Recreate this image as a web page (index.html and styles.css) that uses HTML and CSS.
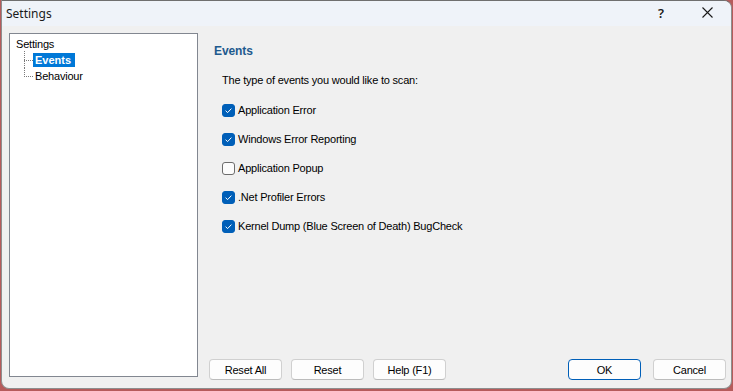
FILE: index.html
```html
<!DOCTYPE html>
<html>
<head>
  <meta charset="UTF-8">
  <title>Settings</title>
  <link rel="stylesheet" href="styles.css">
</head>
<body>
  <div class="window">
    <div class="titlebar">
      <span class="title">Settings</span>
      <span class="caption-btn help">?</span>
      <span class="caption-btn close">
        <svg width="11" height="11" viewBox="0 0 11 11"><path d="M0.5 0.5 L10.5 10.5 M10.5 0.5 L0.5 10.5" stroke="#1a1a1a" stroke-width="1.1" fill="none"/></svg>
      </span>
    </div>

    <div class="main">
      <!-- Tree -->
      <div class="tree">
        <div class="tree-root">Settings</div>
        <div class="tree-children">
          <div class="tree-item"><span class="tree-label selected">Events</span></div>
          <div class="tree-item last"><span class="tree-label">Behaviour</span></div>
        </div>
      </div>

      <!-- Page -->
      <div class="panel">
        <div class="page">
          <div class="page-title">Events</div>
          <div class="page-intro">The type of events you would like to scan:</div>
          <div class="options">
            <label class="option"><span class="check checked"></span>Application Error</label>
            <label class="option"><span class="check checked"></span>Windows Error Reporting</label>
            <label class="option"><span class="check"></span>Application Popup</label>
            <label class="option"><span class="check checked"></span>.Net Profiler Errors</label>
            <label class="option"><span class="check checked"></span>Kernel Dump (Blue Screen of Death) BugCheck</label>
          </div>
        </div>

        <div class="actions">
          <div class="btn-group">
            <button class="btn">Reset All</button>
            <button class="btn">Reset</button>
            <button class="btn">Help (F1)</button>
          </div>
          <div class="btn-group right">
            <button class="btn btn-default">OK</button>
            <button class="btn">Cancel</button>
          </div>
        </div>
      </div>
    </div>
  </div>
</body>
</html>
```

FILE: styles.css
```css
body {
  margin: 0;
  width: 733px;
  height: 391px;
  background: #b65b5b;
  font-family: "Liberation Sans", Arial, sans-serif;
  font-size: 11px;
  letter-spacing: -0.2px;
  color: #000;
  overflow: hidden;
}

.window {
  box-sizing: border-box;
  margin-left: 1px;
  width: 731px;
  height: 389px;
  background: #f0f0f0;
  border: 1px solid #8e8e8e;
  border-top-color: #6f6f6f;
  border-radius: 0 8px 8px 8px;
  display: flex;
  flex-direction: column;
  overflow: hidden;
}

.titlebar {
  height: 25px;
  background: #eff3f9;
  display: flex;
  align-items: center;
  letter-spacing: 0;
}

.title {
  flex: 1;
  padding-left: 4px;
  font-family: "Noto Sans", "Open Sans", sans-serif;
  font-size: 12px;
  color: #1a1a1a;
  padding-bottom: 1px;
}

.caption-btn {
  width: 46px;
  height: 25px;
  display: flex;
  align-items: center;
  justify-content: center;
}

.caption-btn.help {
  font-family: "Noto Sans", sans-serif;
  font-size: 13px;
  font-weight: 600;
  color: #1a1a1a;
  padding-bottom: 2px;
  box-sizing: border-box;
}

.caption-btn.close {
  padding-bottom: 3px;
  box-sizing: border-box;
  margin-right: 1px;
}

.main {
  flex: 1;
  display: flex;
  gap: 11px;
  padding: 7px 5px 8px 7px;
}

/* Tree */
.tree {
  box-sizing: border-box;
  width: 189px;
  height: 344px;
  background: #fff;
  border: 1px solid #828790;
  padding: 4px 0 0 6px;
}

.tree-root {
  height: 13px;
  line-height: 13px;
}

.tree-children {
  margin-left: 8px;
  margin-top: 1px;
}

.tree-item {
  position: relative;
  height: 16px;
  padding-left: 9px;
  display: flex;
  align-items: center;
}

.tree-item::before {
  content: "";
  position: absolute;
  left: 0;
  top: 8px;
  width: 9px;
  border-top: 1px dotted #7a7a7a;
}

.tree-item::after {
  content: "";
  position: absolute;
  left: 0;
  top: -1px;
  height: 17px;
  border-left: 1px dotted #7a7a7a;
}

.tree-item.last::after {
  height: 10px;
}

.tree-label {
  padding: 0 3px 0 2px;
  height: 14px;
  line-height: 14px;
}

.tree-label.selected {
  padding: 0 4px 0 2px;
  background: #0078d7;
  color: #fff;
  font-weight: bold;
  letter-spacing: 0;
}

/* Page */
.panel {
  flex: 1;
  display: flex;
  flex-direction: column;
}

.page {
  flex: 1;
  padding: 11px 0 0 5px;
}

.page-title {
  font-size: 12px;
  font-weight: bold;
  color: #1e5a8e;
  line-height: 15px;
  letter-spacing: -0.1px;
}

.page-intro {
  margin: 15px 0 0 8px;
  line-height: 13px;
}

.options {
  margin: 17px 0 0 8px;
  display: flex;
  flex-direction: column;
  gap: 16px;
}

.option {
  display: flex;
  align-items: center;
  gap: 3px;
  height: 13px;
  line-height: 13px;
}

.check {
  box-sizing: border-box;
  width: 13px;
  height: 13px;
  border-radius: 3px;
  border: 1px solid #6c6c6c;
  background: #fcfcfc;
}

.check.checked {
  border-color: #005fb8;
  background: #005fb8 url("data:image/svg+xml;utf8,<svg xmlns='http://www.w3.org/2000/svg' width='11' height='11' viewBox='0 0 11 11'><path d='M2.6 5.7 L4.6 7.6 L8.4 3.6' stroke='white' stroke-width='1' fill='none'/></svg>") center / 11px 11px no-repeat;
}

/* Buttons */
.actions {
  display: flex;
  justify-content: space-between;
  align-items: flex-end;
}

.btn-group {
  display: flex;
  gap: 9px;
}

.btn-group.right {
  gap: 12px;
}

.btn {
  box-sizing: border-box;
  width: 73px;
  height: 21px;
  padding: 0;
  font-family: "Liberation Sans", Arial, sans-serif;
  font-size: 11px;
  letter-spacing: -0.2px;
  color: #000;
  background: #fdfdfd;
  border: 1px solid #d0d0d0;
  border-bottom-color: #bcbcbc;
  border-radius: 4px;
}

.btn-default {
  border: 1px solid #005fb8;
}
```
